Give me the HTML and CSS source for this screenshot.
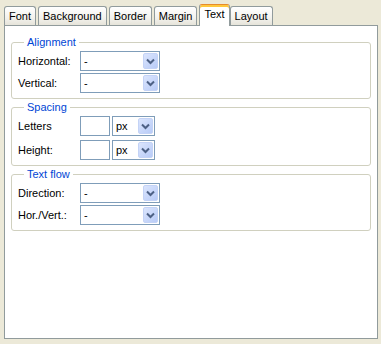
FILE: index.html
```html
<!DOCTYPE html>
<html lang="en">
<head>
  <meta charset="UTF-8">
  <title>Style - Text</title>
  <link rel="stylesheet" href="styles.css">
</head>
<body>
  <div class="tabs">
    <span class="tab">Font</span>
    <span class="tab">Background</span>
    <span class="tab">Border</span>
    <span class="tab">Margin</span>
    <span class="tab active">Text</span>
    <span class="tab">Layout</span>
  </div>

  <div class="panel">
    <fieldset>
      <legend>Alignment</legend>
      <div class="rows">
        <label>Horizontal:</label>
        <span class="combo wide"><select><option>-</option></select><span class="drop"><svg width="15" height="16" viewBox="0 0 15 16"><path d="M4 6.5 L7.5 10 L11 6.5" stroke="#4d6185" stroke-width="2" fill="none"/></svg></span></span>
        <label>Vertical:</label>
        <span class="combo wide"><select><option>-</option></select><span class="drop"><svg width="15" height="16" viewBox="0 0 15 16"><path d="M4 6.5 L7.5 10 L11 6.5" stroke="#4d6185" stroke-width="2" fill="none"/></svg></span></span>
      </div>
    </fieldset>

    <fieldset>
      <legend>Spacing</legend>
      <div class="rows spaced">
        <label>Letters</label>
        <span class="pair">
          <input type="text" class="num">
          <span class="combo unit"><select><option>px</option></select><span class="drop"><svg width="15" height="16" viewBox="0 0 15 16"><path d="M4 6.5 L7.5 10 L11 6.5" stroke="#4d6185" stroke-width="2" fill="none"/></svg></span></span>
        </span>
        <label>Height:</label>
        <span class="pair">
          <input type="text" class="num">
          <span class="combo unit"><select><option>px</option></select><span class="drop"><svg width="15" height="16" viewBox="0 0 15 16"><path d="M4 6.5 L7.5 10 L11 6.5" stroke="#4d6185" stroke-width="2" fill="none"/></svg></span></span>
        </span>
      </div>
    </fieldset>

    <fieldset>
      <legend>Text flow</legend>
      <div class="rows">
        <label>Direction:</label>
        <span class="combo wide"><select><option>-</option></select><span class="drop"><svg width="15" height="16" viewBox="0 0 15 16"><path d="M4 6.5 L7.5 10 L11 6.5" stroke="#4d6185" stroke-width="2" fill="none"/></svg></span></span>
        <label>Hor./Vert.:</label>
        <span class="combo wide"><select><option>-</option></select><span class="drop"><svg width="15" height="16" viewBox="0 0 15 16"><path d="M4 6.5 L7.5 10 L11 6.5" stroke="#4d6185" stroke-width="2" fill="none"/></svg></span></span>
      </div>
    </fieldset>
  </div>
</body>
</html>
```

FILE: styles.css
```css
body {
  margin: 0;
  padding: 4px 0 0 4px;
  background: #ece9d8;
  font-family: "Liberation Sans", Arial, sans-serif;
  font-size: 11px;
  color: #000;
}
.tabs {
  display: flex;
  align-items: flex-end;
  height: 21px;
}
.tab {
  box-sizing: border-box;
  height: 19px;
  line-height: 18px;
  padding: 0 4px;
  margin-right: 2px;
  border: 1px solid #919b9c;
  border-bottom: none;
  border-radius: 3px 3px 0 0;
  background: linear-gradient(#ffffff, #f3f2ed 60%, #e6e4da);
}
.tab.active {
  position: relative;
  z-index: 1;
  height: 22px;
  line-height: 19px;
  margin-bottom: -1px;
  margin-right: 0;
  background: #fff;
  border-top: 1px solid #e68b2c;
  box-shadow: inset 0 2px 0 #ffc83c;
}
.panel {
  box-sizing: border-box;
  width: 374px;
  height: 314px;
  padding: 10px 6px;
  background: #fff;
  border: 1px solid #919b9c;
}
fieldset {
  margin: 0 0 2px;
  padding: 2px 6px 5px;
  border: 1px solid #d0d0bf;
  border-radius: 3px;
}
legend {
  margin-left: 6px;
  padding: 0 3px;
  line-height: 13px;
  color: #0046d5;
}
.rows {
  display: grid;
  grid-template-columns: 62px auto;
  row-gap: 2px;
  align-items: center;
}
.rows.spaced {
  row-gap: 4px;
}
.rows label {
  line-height: 20px;
}
.pair {
  display: flex;
  gap: 2px;
}
.combo {
  box-sizing: border-box;
  display: inline-flex;
  align-items: center;
  height: 20px;
  border: 1px solid #7f9db9;
  background: #fff;
}
.combo.wide {
  width: 80px;
}
.combo.unit {
  width: 43px;
}
.combo select {
  appearance: none;
  flex: 1;
  min-width: 0;
  border: none;
  background: transparent;
  padding: 0 0 0 3px;
  font: inherit;
  color: #000;
}
.drop {
  box-sizing: border-box;
  display: flex;
  width: 15px;
  height: 16px;
  margin-right: 1px;
  border: 1px solid #c4d3f6;
  border-radius: 2px;
  background: linear-gradient(135deg, #dbe5fd, #b8cbf7);
}
.drop svg {
  margin: -1px;
}
.num {
  box-sizing: border-box;
  width: 30px;
  height: 20px;
  margin: 0;
  border: 1px solid #7f9db9;
  padding: 0 2px;
  font: inherit;
}
```
